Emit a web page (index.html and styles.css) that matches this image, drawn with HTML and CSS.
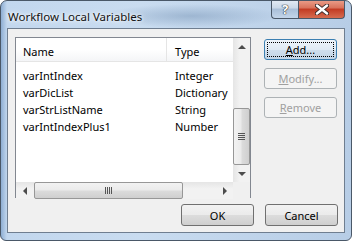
FILE: index.html
```html
<!DOCTYPE html>
<html lang="en">

<head>
    <meta charset="UTF-8">
    <meta name="viewport" content="width=device-width, initial-scale=1.0">
    <link rel="stylesheet" href="styles.css">
    <title>Workflow Local Variables</title>
</head>

<body>
    <div class="window">
        <div class="titlebar">
            <span class="title">Workflow Local Variables</span>
            <div class="caption-buttons">
                <span class="cap-btn help">?</span>
                <span class="cap-btn close">
                    <svg width="14" height="11" viewBox="0 0 14 11">
                        <path d="M2 1.5 L12 9.5 M12 1.5 L2 9.5" stroke="#3a2a2a" stroke-width="4.2" stroke-linecap="round"/>
                        <path d="M2 1.5 L12 9.5 M12 1.5 L2 9.5" stroke="#fff" stroke-width="2.4" stroke-linecap="round"/>
                    </svg>
                </span>
            </div>
        </div>

        <div class="client">
            <div class="top-row">
                <div class="listview">
                    <div class="list-body">
                        <div class="list-header">
                            <div class="col-name">Name</div>
                            <div class="col-type">Type</div>
                        </div>
                        <div class="rows">
                            <div class="row"><span class="col-name">varIntIndex</span><span class="col-type">Integer</span></div>
                            <div class="row"><span class="col-name">varDicList</span><span class="col-type">Dictionary</span></div>
                            <div class="row"><span class="col-name">varStrListName</span><span class="col-type">String</span></div>
                            <div class="row"><span class="col-name">varIntIndexPlus1</span><span class="col-type">Number</span></div>
                        </div>
                    </div>
                    <div class="vscroll">
                        <div class="sb-btn"><span class="arrow-up"></span></div>
                        <div class="vtrack">
                            <div class="vthumb"><span class="grip-h"></span></div>
                        </div>
                        <div class="sb-btn"><span class="arrow-down"></span></div>
                    </div>
                    <div class="hscroll">
                        <div class="sb-btn"><span class="arrow-left"></span></div>
                        <div class="htrack">
                            <div class="hthumb"><span class="grip-v"></span></div>
                        </div>
                        <div class="sb-btn"><span class="arrow-right"></span></div>
                    </div>
                    <div class="sb-corner"></div>
                </div>

                <div class="side-buttons">
                    <button class="btn default"><span class="focus"><u>A</u>dd...</span></button>
                    <button class="btn" disabled><u>M</u>odify...</button>
                    <button class="btn" disabled><u>R</u>emove</button>
                </div>
            </div>

            <div class="bottom-row">
                <button class="btn">OK</button>
                <button class="btn">Cancel</button>
            </div>
        </div>
    </div>
</body>

</html>
```

FILE: styles.css
```css
* {
    box-sizing: border-box;
}

body {
    margin: 0;
    font-family: "Noto Sans", sans-serif;
    font-size: 11px;
    color: #000;
    background: #fff;
}

.window {
    width: 352px;
    height: 241px;
    border: 1px solid #4a5868;
    border-radius: 7px 7px 6px 6px;
    background: linear-gradient(to right, #8eaed3 0px, #c2d7ee 6px, #c9dcf0 40%, #b7cde6 100%);
    display: flex;
    flex-direction: column;
    overflow: hidden;
}

.titlebar {
    height: 27px;
    display: flex;
    align-items: flex-start;
    background: radial-gradient(ellipse 90px 12px at 190px 15px, rgba(110, 140, 175, 0.45), transparent);
}

.title {
    margin: 8px 0 0 7px;
    font-size: 11.5px;
    color: #111;
    text-shadow: 0 0 6px #fff, 0 0 3px #fff;
}

.caption-buttons {
    margin-left: auto;
    margin-right: 6px;
    display: flex;
}

.cap-btn {
    height: 19px;
    margin-top: -1px;
    display: flex;
    align-items: center;
    justify-content: center;
    border: 1px solid #4a5868;
    border-top: none;
}

.help {
    width: 27px;
    border-radius: 0 0 0 4px;
    border-right: none;
    background: linear-gradient(to bottom, #e4ecf5 0%, #cad8e8 45%, #a9bfd8 50%, #c3d5ea 100%);
    color: #fff;
    font-weight: bold;
    font-size: 13px;
    text-shadow: 0 0 1px #333, 0 0 1px #333, 0 0 1px #333;
}

.close {
    width: 47px;
    border-radius: 0 0 4px 0;
    background: linear-gradient(to bottom, #eba08c 0%, #d8715a 45%, #c23a22 50%, #d66c50 100%);
}

.client {
    flex: 1;
    margin: 0 6px 7px 6px;
    border: 1px solid #6f7e90;
    background: #f0f0f0;
    padding: 8px 6px 6px 7px;
    display: flex;
    flex-direction: column;
}

.top-row {
    display: flex;
    gap: 13px;
}

.listview {
    width: 236px;
    height: 161px;
    border: 1px solid #828790;
    background: #fff;
    display: grid;
    grid-template-columns: 1fr 17px;
    grid-template-rows: 1fr 17px;
}

.list-body {
    overflow: hidden;
}

.list-header {
    height: 24px;
    display: flex;
    align-items: center;
    background: linear-gradient(to bottom, #ffffff 0%, #ffffff 50%, #f4f5f7 100%);
    border-bottom: 1px solid #e5e5e5;
}

.list-header .col-name {
    height: 100%;
    display: flex;
    align-items: center;
    border-right: 1px solid #e5e5e5;
}

.list-header .col-name,
.list-header .col-type {
    padding-top: 3px;
}

.col-name {
    width: 151px;
    padding-left: 7px;
    flex-shrink: 0;
}

.col-type {
    padding-left: 8px;
}

.rows {
    padding-top: 5px;
}

.row {
    height: 17px;
    display: flex;
    align-items: center;
}

.vscroll {
    display: flex;
    flex-direction: column;
    background: linear-gradient(to right, #e5e5e5, #f2f2f2 40%, #f2f2f2);
}

.hscroll {
    display: flex;
    background: linear-gradient(to bottom, #e5e5e5, #f2f2f2 40%, #f2f2f2);
}

.sb-corner {
    background: #f0f0f0;
}

.sb-btn {
    width: 17px;
    height: 17px;
    flex-shrink: 0;
    display: flex;
    align-items: center;
    justify-content: center;
}

.vtrack {
    flex: 1;
    padding-top: 53px;
}

.vthumb {
    width: 17px;
    height: 57px;
    border: 1px solid #979797;
    border-radius: 2px;
    background: linear-gradient(to right, #f2f2f2, #ebebeb 45%, #dbdbdb 55%, #cfcfcf);
    display: flex;
    align-items: center;
    justify-content: center;
}

.htrack {
    flex: 1;
    padding-left: 1px;
}

.hthumb {
    width: 149px;
    height: 17px;
    border: 1px solid #979797;
    border-radius: 2px;
    background: linear-gradient(to bottom, #f2f2f2, #ebebeb 45%, #dbdbdb 55%, #cfcfcf);
    display: flex;
    align-items: center;
    justify-content: center;
}

.grip-h {
    width: 7px;
    height: 7px;
    background: repeating-linear-gradient(to bottom, #555 0, #555 1px, transparent 1px, transparent 2px);
}

.grip-v {
    width: 7px;
    height: 7px;
    background: repeating-linear-gradient(to right, #555 0, #555 1px, transparent 1px, transparent 2px);
}

.arrow-up,
.arrow-down,
.arrow-left,
.arrow-right {
    width: 0;
    height: 0;
    border: 4px solid transparent;
}

.arrow-up {
    border-bottom-color: #4d4d4d;
    border-top-width: 0;
}

.arrow-down {
    border-top-color: #4d4d4d;
    border-bottom-width: 0;
}

.arrow-left {
    border-right-color: #4d4d4d;
    border-left-width: 0;
}

.arrow-right {
    border-left-color: #4d4d4d;
    border-right-width: 0;
}

.side-buttons {
    display: flex;
    flex-direction: column;
    gap: 8px;
    padding-top: 2px;
}

.btn {
    width: 73px;
    height: 21px;
    font-family: "Noto Sans", sans-serif;
    font-size: 11px;
    color: #000;
    border: 1px solid #707070;
    border-radius: 3px;
    background: linear-gradient(to bottom, #f2f2f2 0%, #ebebeb 50%, #dddddd 50%, #cfcfcf 100%);
    padding: 0;
    display: flex;
    align-items: center;
    justify-content: center;
}

.btn:disabled {
    color: #a0a0a0;
    border-color: #adb2b5;
    background: #f4f4f4;
}

.btn.default {
    border-color: #3c7fb1;
    background: linear-gradient(to bottom, #eef4fa 0%, #e0eaf4 50%, #d0deec 50%, #c4d5e6 100%);
    padding: 2px;
}

.focus {
    width: 100%;
    height: 100%;
    border: 1px dotted #000;
    display: flex;
    align-items: center;
    justify-content: center;
}

.bottom-row {
    margin-top: 6px;
    display: flex;
    justify-content: flex-end;
    gap: 11px;
}

.bottom-row .btn {
    height: 22px;
}
```
